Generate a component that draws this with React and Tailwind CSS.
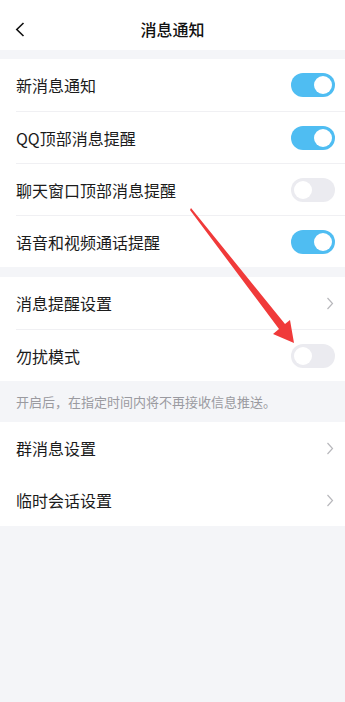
import React from "react";

const font = { fontFamily: '"Noto Sans CJK SC", "Noto Sans", sans-serif' };

function Toggle({ on }) {
  return (
    <div
      className={
        "relative w-[44px] h-[24px] rounded-full shrink-0 " +
        (on ? "bg-[#4fbdf2]" : "bg-[#ebebf0]")
      }
    >
      <div
        className={
          "absolute top-[3px] w-[18px] h-[18px] rounded-full bg-white " +
          (on ? "right-[3px]" : "left-[3px]")
        }
      />
    </div>
  );
}

function Chevron() {
  return (
    <svg width="8" height="13" viewBox="0 0 8 13" className="shrink-0 mr-[1px]">
      <path d="M1.5 1 L6.5 6.5 L1.5 12" fill="none" stroke="#b8b8bc" strokeWidth="1.2" />
    </svg>
  );
}

function Row({ label, right, first }) {
  return (
    <div className="h-[52px] pl-4 bg-white">
      <div
        className={
          "h-full flex items-center justify-between pr-[10px] " +
          (first ? "" : "border-t border-[#f0f0f3]")
        }
      >
        <span className="text-[16px] text-[#1b1b1b] leading-none">{label}</span>
        {right}
      </div>
    </div>
  );
}

export default function App() {
  return (
    <div className="relative min-h-[702px] bg-[#f4f5f8]" style={font}>
      <div className="h-[50px] pt-[8px] bg-white grid grid-cols-[48px_1fr_48px] items-center">
        <div className="pl-[15px] flex items-center">
          <svg width="10" height="15" viewBox="0 0 10 15">
            <path d="M8.5 1 L1.8 7.5 L8.5 14" fill="none" stroke="#111" strokeWidth="1.6" />
          </svg>
        </div>
        <div className="text-center text-[16px] font-medium text-[#111] leading-none">消息通知</div>
        <div />
      </div>
      <div className="h-[9px]" />
      <div>
        <Row first label="新消息通知" right={<Toggle on />} />
        <Row label="QQ顶部消息提醒" right={<Toggle on />} />
        <Row label="聊天窗口顶部消息提醒" right={<Toggle />} />
        <Row label="语音和视频通话提醒" right={<Toggle on />} />
      </div>
      <div className="h-[10px]" />
      <div>
        <Row first label="消息提醒设置" right={<Chevron />} />
        <Row label="勿扰模式" right={<Toggle />} />
      </div>
      <div className="h-[41px] px-4 flex items-center text-[13px] text-[#9a9aa0]">
        开启后，在指定时间内将不再接收信息推送。
      </div>
      <div>
        <Row first label="群消息设置" right={<Chevron />} />
        <Row first label="临时会话设置" right={<Chevron />} />
      </div>

      <svg
        className="absolute left-0 top-0 pointer-events-none"
        width="345"
        height="702"
        viewBox="0 0 345 702"
      >
        <polygon
          points="191,208 285,324 290,320 294,343 273,334 279,329 190,210"
          fill="#f03a3a"
        />
      </svg>
    </div>
  );
}
